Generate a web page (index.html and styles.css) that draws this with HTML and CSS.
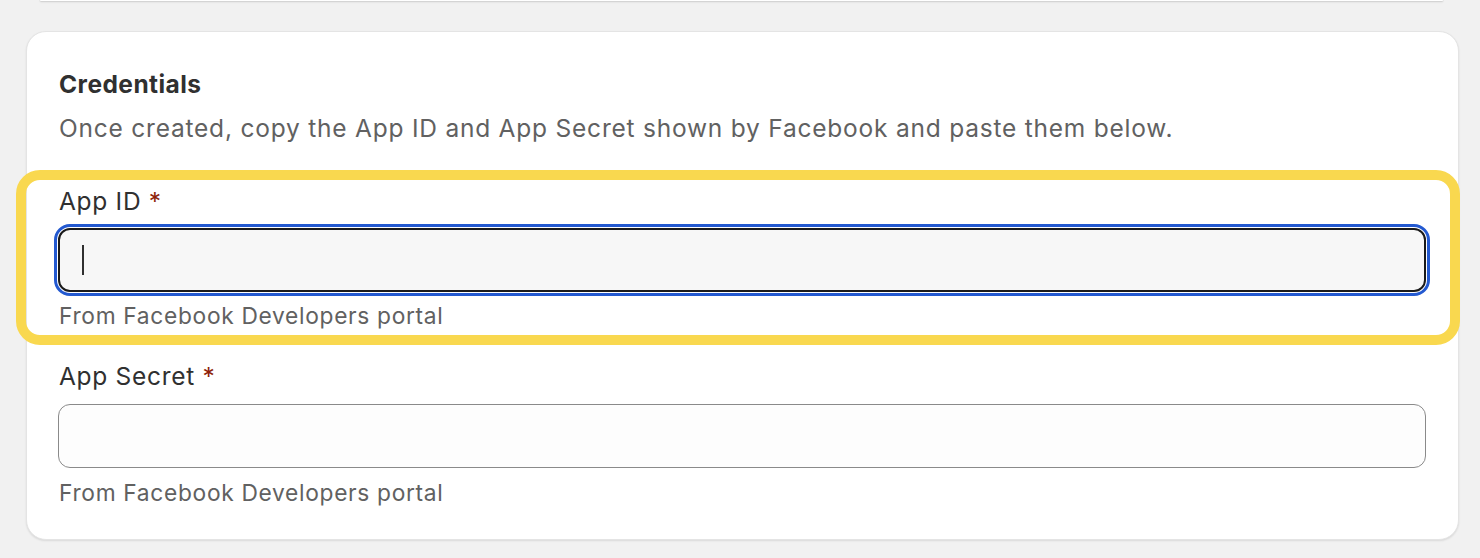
FILE: index.html
```html
<!DOCTYPE html>
<html lang="en">
<head>
<meta charset="utf-8">
<title>Credentials</title>
<link rel="stylesheet" href="styles.css">
</head>
<body>
<div class="page">
  <div class="prev-card"></div>
  <section class="card">
    <h2 class="title">Credentials</h2>
    <p class="subtitle">Once created, copy the App ID and App Secret shown by Facebook and paste them below.</p>
    <div class="field field-highlighted">
      <div class="highlight"></div>
      <label class="label">App ID <span class="req">*</span></label>
      <div class="input input-focused"><span class="caret"></span></div>
      <div class="help">From Facebook Developers portal</div>
    </div>
    <div class="field field-second">
      <label class="label">App Secret <span class="req">*</span></label>
      <div class="input"></div>
      <div class="help">From Facebook Developers portal</div>
    </div>
  </section>
</div>
</body>
</html>
```

FILE: styles.css
```css
html, body {
  margin: 0;
  padding: 0;
  background: #f1f1f1;
}
body {
  font-family: Inter, "Noto Sans", sans-serif;
  color: #303030;
}
.page {
  width: 1480px;
  height: 558px;
  overflow: hidden;
  position: relative;
}
.prev-card {
  margin: 0 37px 0 40px;
  height: 1px;
  background: #fff;
  border-radius: 0 0 20px 20px;
  box-shadow: 0 1px 2px rgba(0,0,0,0.18), 0 0 0 1px rgba(0,0,0,0.04);
}
.card {
  margin: 30px 0 0 26px;
  width: 1433px;
  box-sizing: border-box;
  background: #fff;
  border: 1px solid #e4e4e4;
  border-radius: 20px;
  box-shadow: 0 1px 2px rgba(0,0,0,0.10);
  padding: 32px 32px 31px 32px;
}
.title {
  margin: 5px 0 0 0;
  font-size: 24.5px;
  line-height: 30px;
  font-weight: 650;
  letter-spacing: 0.45px;
  color: #303030;
}
.subtitle {
  margin: 14px 0 0 0;
  font-size: 24.5px;
  line-height: 30px;
  letter-spacing: 0.78px;
  color: #616161;
}
.field {
  position: relative;
  margin-top: 43px;
}
.field-second {
  margin-top: 30px;
}
.highlight {
  position: absolute;
  left: -43px;
  right: -34px;
  top: -16px;
  bottom: -14px;
  border: 10px solid #f9d84f;
  border-radius: 24px;
  pointer-events: none;
}
.label {
  display: block;
  font-size: 24.5px;
  line-height: 30px;
  letter-spacing: 0.7px;
  color: #303030;
}
.req {
  color: #8e1f0b;
}
.input {
  margin-top: 13px;
  height: 64px;
  box-sizing: border-box;
  border: 1px solid #8a8a8a;
  border-radius: 12px;
  background: #fdfdfd;
  margin-left: -1px;
  position: relative;
}
.input-focused {
  margin-top: 12px;
  border: 2px solid #1a1a1a;
  background: #f7f7f7;
  outline: 3.5px solid #2359d0;
  outline-offset: 1px;
  display: flex;
  align-items: center;
  padding-left: 22px;
}
.caret {
  width: 2px;
  height: 30px;
  background: #303030;
}
.help {
  margin-top: 9px;
  font-size: 22.75px;
  line-height: 30px;
  letter-spacing: 0.68px;
  color: #616161;
}
.field-second .help {
  margin-top: 10px;
}
```
